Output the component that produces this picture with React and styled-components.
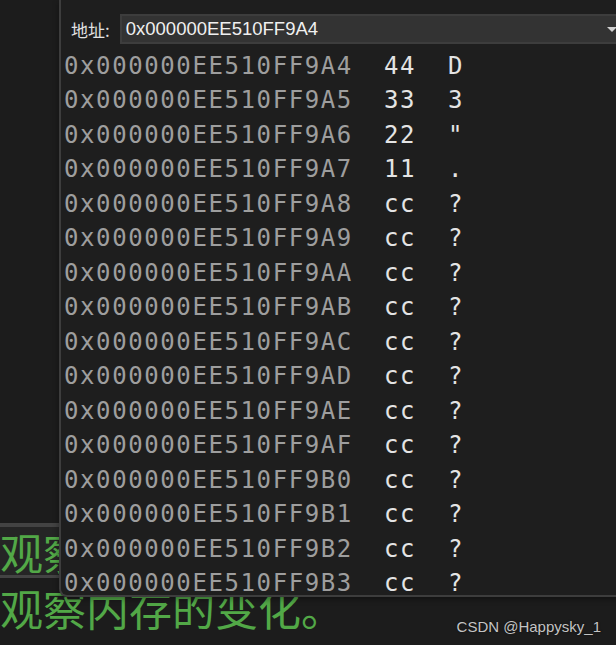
import React from 'react';
import styled, { createGlobalStyle } from 'styled-components';

const GlobalStyle = createGlobalStyle`
  html, body {
    margin: 0;
    padding: 0;
    background: #1c1c1c;
    overflow: hidden;
  }
`;

const Stage = styled.div`
  position: relative;
  width: 616px;
  height: 645px;
  overflow: hidden;
  background: #1c1c1c;
`;

const Doc = styled.div`
  display: flex;
  flex-direction: column;
  padding-top: 523px;
  font-family: "Noto Sans CJK SC", sans-serif;
  font-size: 43px;
  color: #52a847;
  white-space: nowrap;
`;

const DocLine = styled.div`
  height: ${p => (p.$current ? '48px' : '52px')};
  line-height: 48px;
  margin-top: ${p => (p.$current ? '0' : '5px')};
  background: ${p => (p.$current ? '#252525' : 'transparent')};
  border-top: ${p => (p.$current ? '4px solid #434343' : 'none')};
  border-bottom: ${p => (p.$current ? '3px solid #434343' : 'none')};
  overflow: hidden;
`;

const MemWindow = styled.div`
  position: absolute;
  left: 59px;
  top: 0;
  width: 570px;
  height: 595px;
  background: #1e1e1e;
  border-left: 2px solid #3d3d3d;
  border-bottom: 2px solid #3d3d3d;
  border-bottom-left-radius: 8px;
  box-shadow: 0 2px 6px rgba(0, 0, 0, 0.4);
  display: flex;
  flex-direction: column;
  overflow: hidden;
`;

const Toolbar = styled.div`
  display: flex;
  align-items: center;
  gap: 10px;
  padding: 14px 0 0 10px;
  height: 30px;
  flex-shrink: 0;
`;

const Label = styled.span`
  font-family: "Noto Sans CJK SC", sans-serif;
  font-size: 17px;
  color: #e2e2e2;
`;

const AddressBox = styled.div`
  flex: 1;
  height: 26px;
  display: flex;
  align-items: center;
  justify-content: space-between;
  padding: 0 4px 0 4px;
  background: #333333;
  border: 2px solid #3d3d3d;
  font-family: "Liberation Sans", Arial, sans-serif;
  font-size: 18.5px;
  color: #f0f0f0;
`;

const Caret = styled.span`
  width: 0;
  height: 0;
  margin-right: 8px;
  border-left: 5px solid transparent;
  border-right: 5px solid transparent;
  border-top: 5px solid #d0d0d0;
`;

const Rows = styled.div`
  display: flex;
  flex-direction: column;
  padding: 4.75px 0 0 3px;
  font-family: "DejaVu Sans Mono", monospace;
  font-size: 24px;
  letter-spacing: 1.6px;
`;

const Row = styled.div`
  display: grid;
  grid-template-columns: 320px 64px 1fr;
  height: 34.5px;
  line-height: 34.5px;
  white-space: nowrap;
`;

const Cell = styled.span`
  color: ${p => (p.$addr ? '#9e9e9e' : '#e4e4e4')};
`;

const Watermark = styled.div`
  position: absolute;
  right: 15px;
  bottom: 10px;
  font-family: "Liberation Sans", Arial, sans-serif;
  font-size: 15px;
  color: #c4c4c4;
  text-shadow: 0 0 2px rgba(0, 0, 0, 0.6);
`;

const first = [
  ['A4', '44', 'D'],
  ['A5', '33', '3'],
  ['A6', '22', '"'],
  ['A7', '11', '.'],
];
const rest = ['A8', 'A9', 'AA', 'AB', 'AC', 'AD', 'AE', 'AF', 'B0', 'B1', 'B2', 'B3'];
const rows = [...first, ...rest.map(s => [s, 'cc', '?'])];

const App = () => {
  return (
    <Stage>
      <GlobalStyle />
      <Doc>
        <DocLine $current>观察</DocLine>
        <DocLine>观察内存的变化。</DocLine>
      </Doc>
      <MemWindow>
        <Toolbar>
          <Label>地址:</Label>
          <AddressBox>
            <span>0x000000EE510FF9A4</span>
            <Caret />
          </AddressBox>
        </Toolbar>
        <Rows>
          {rows.map(([suffix, val, ch]) => (
            <Row key={suffix}>
              <Cell $addr>0x000000EE510FF9{suffix}</Cell>
              <Cell>{val}</Cell>
              <Cell>{ch}</Cell>
            </Row>
          ))}
        </Rows>
      </MemWindow>
      <Watermark>CSDN @Happysky_1</Watermark>
    </Stage>
  );
};

export default App;
